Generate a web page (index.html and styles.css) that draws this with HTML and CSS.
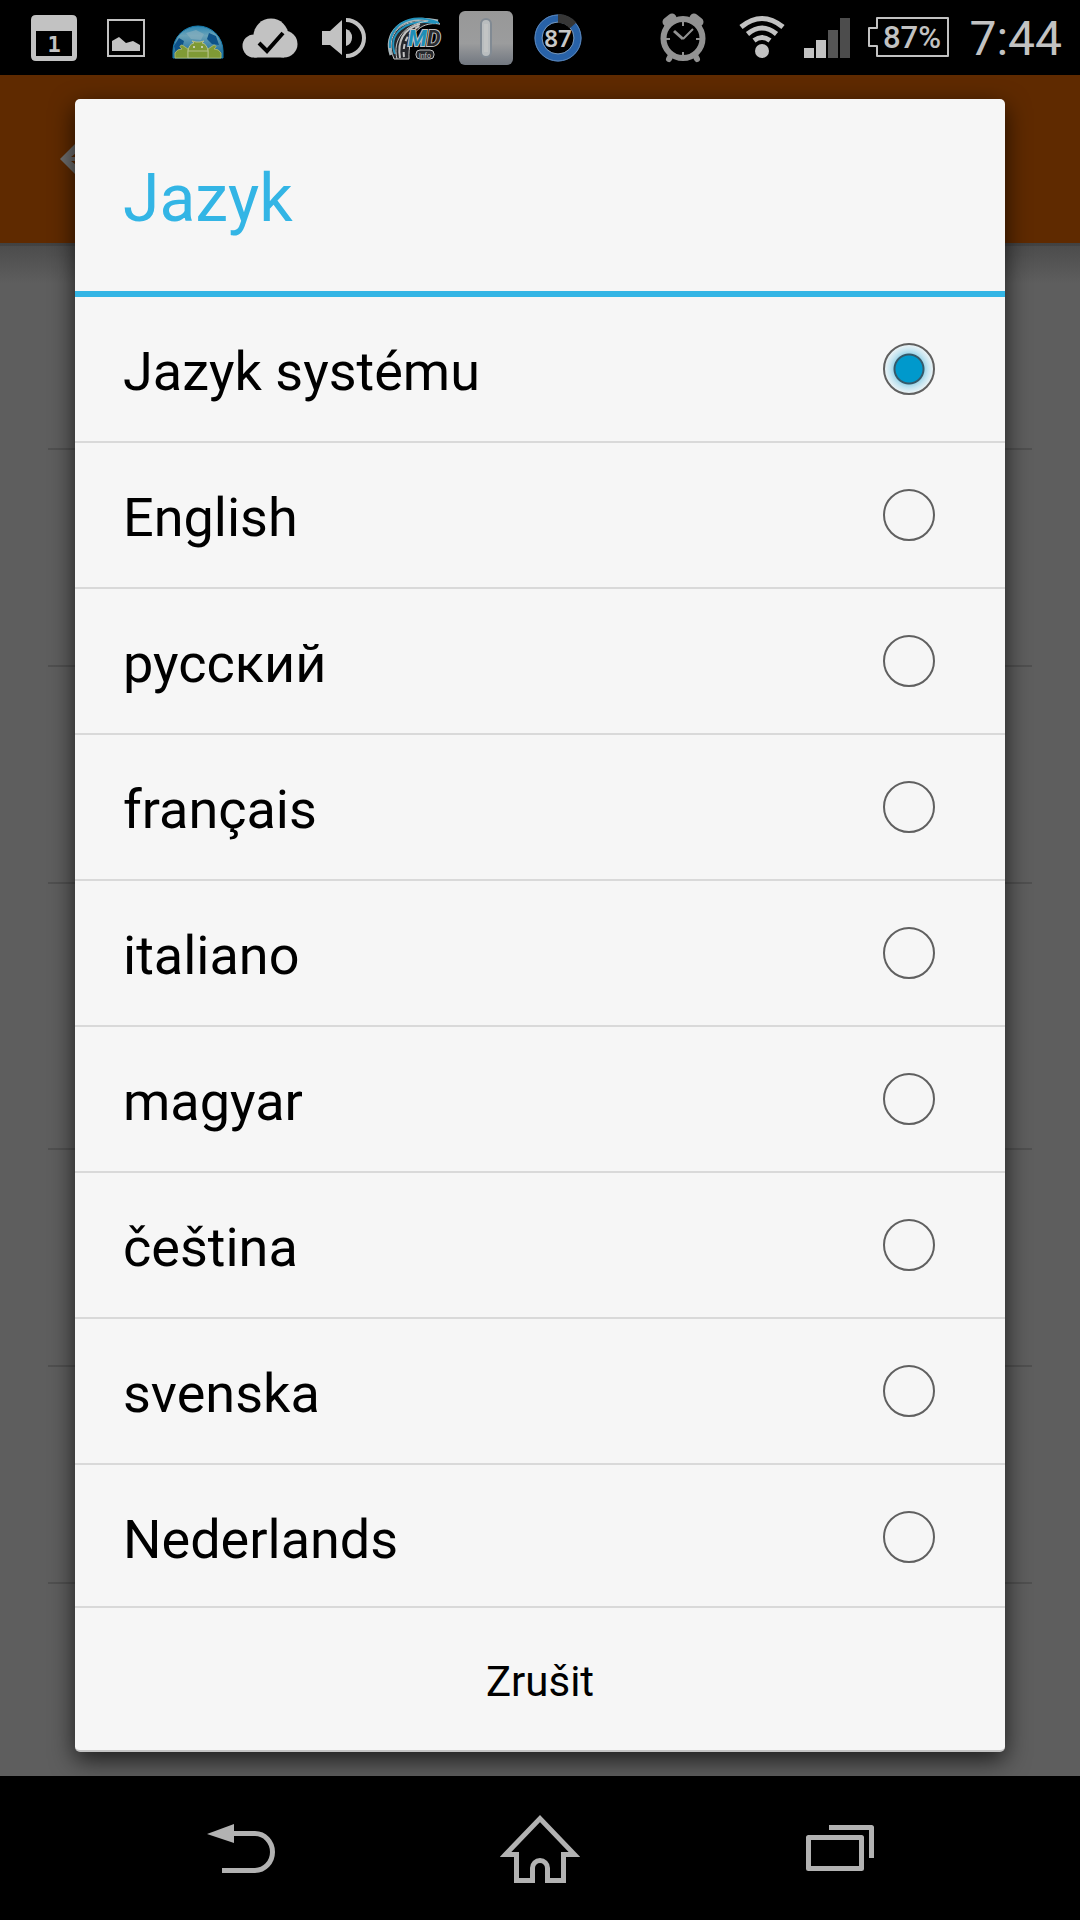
FILE: index.html
```html
<!DOCTYPE html>
<html lang="cs">
<head>
<meta charset="utf-8">
<meta name="viewport" content="width=device-width, initial-scale=1">
<title>Jazyk</title>
<link rel="stylesheet" href="styles.css">
</head>
<body>
<header class="status">
  <div class="notifications">
    <svg class="note" viewBox="0 0 72 75"><path fill="#c2c2c2" fill-rule="evenodd" d="M18 15h36q5 0 5 5v36q0 5-5 5H18q-5 0-5-5V20q0-5 5-5zM18 31v25h36V31z"/><text class="cal-day" x="36" y="52">1</text></svg>
    <svg class="note" viewBox="0 0 72 75"><rect x="18" y="20" width="36" height="36" fill="none" stroke="#c2c2c2" stroke-width="2"/><path fill="#c2c2c2" d="M22 41l7-4 7 6 7-2 7 4v6H22z"/></svg>
    <svg class="note" viewBox="0 0 72 75">
      <defs><linearGradient id="globe" x2="0" y2="1"><stop offset="0" stop-color="#2b86b4"/><stop offset=".3" stop-color="#6aa3b8"/><stop offset="1" stop-color="#0b5f97"/></linearGradient></defs>
      <path fill="url(#globe)" stroke="#167db0" stroke-width="1" d="M11 58V51a25 25 0 0 1 50 0v7z"/>
      <path fill="#0d5289" d="M12 46l5-8 5 3-2 7-6 5zM47 33l7 3 3 9-7-1-5-5z"/><path fill="#86aebe" d="M24 33l10-3 8 4-3 6-10-1z" opacity=".7"/>
      <path fill="#7f9a35" stroke="#a9b56e" d="M13 58v-5q2-4 7-4-4-3 0-4l6 4v9zM59 58v-5q-2-4-7-4 4-3 0-4l-6 4v9z"/>
      <path fill="#7f9a35" stroke="#b6c08b" d="M26 58v-7q1-7 6-8l-2-2 4 1h4l4-1-2 2q5 1 6 8v7zM26 51h20"/><circle cx="32" cy="47" r="1" fill="#ddd"/><circle cx="40" cy="47" r="1" fill="#ddd"/>
    </svg>
    <svg class="note" viewBox="0 0 72 75"><g fill="#c2c2c2"><circle cx="20" cy="46" r="11.500"/><circle cx="50" cy="44" r="13.500"/><circle cx="37" cy="36" r="17.500"/><path d="M20 40h30v17.500H20z"/></g><path d="M25 43l8 8 16-18" fill="none" stroke="#000" stroke-width="4"/></svg>
    <svg class="note" viewBox="0 0 72 75"><path fill="#c2c2c2" d="M16 31h8l12-11v35L24 45h-8z"/><path d="M40 29a9 9 0 0 1 0 17z" fill="#c2c2c2"/><path d="M40 20a18 18 0 0 1 0 36" fill="none" stroke="#c2c2c2" stroke-width="4"/></svg>
    <svg class="note" viewBox="0 0 72 75">
      <path fill="#25272b" stroke="#c2c2c2" stroke-width="1" d="M16 59C6 35 22 14 62 24 40 21 30 36 31 59z"/>
      <g fill="none"><path stroke="#a9b6ba" stroke-width="3" d="M13 55C6 35 20 13 60 21"/><path stroke="#2293bd" stroke-width="2" d="M12 48C10 28 29 10 61 23M17 54C10 35 25 18 58 23"/><path stroke="#c2c2c2" stroke-width="2" d="M22 58C19 40 26 29 42 24"/><path stroke="#c2c2c2" d="M19 59C14 39 27 24 50 21"/><path stroke="#c2c2c2" stroke-width="2" stroke-dasharray="5 3" d="M26 57C24 42 31 30 44 25"/></g>
      <text class="md" x="30" y="46"><tspan fill="#1d8eb7">M</tspan><tspan fill="#292b2e">D</tspan></text>
      <rect x="38" y="50" width="18" height="9" rx="4" fill="#25272b" stroke="#c2c2c2"/><text class="md-info" x="47" y="58">info</text>
    </svg>
    <svg class="note" viewBox="0 0 72 75"><defs><linearGradient id="plate" x2="0" y2="1"><stop offset="0" stop-color="#989898"/><stop offset=".6" stop-color="#9b9c9d"/><stop offset="1" stop-color="#717780"/></linearGradient></defs><rect x="9" y="11" width="54" height="54" rx="6" fill="url(#plate)"/><rect x="31" y="19" width="10" height="38" rx="5" fill="#b9bdbf" stroke="#818a93" stroke-width="2"/><path d="M36 24v28" stroke="#c2c4c4" stroke-width="4"/></svg>
    <svg class="note" viewBox="0 0 72 75"><circle cx="36" cy="38" r="19.500" fill="none" stroke="#2862a8" stroke-width="8"/><circle cx="36" cy="38" r="23" fill="none" stroke="#5c85b6" stroke-width="1"/><circle cx="36" cy="38" r="16" fill="none" stroke="#7795b5" stroke-width="1"/><path d="M36 18.500a19.500 19.500 0 0 1 15 7" fill="none" stroke="#363636" stroke-width="9"/><text class="ring-value" x="36" y="47">87</text></svg>
  </div>
  <div class="system">
    <svg class="alarm" viewBox="660 0 60 75"><g fill="none" stroke="#929292"><circle cx="683" cy="38.500" r="19.500" stroke-width="6"/><path stroke-width="9" stroke-linecap="round" d="M667 22l5-4M699 22l-5-4"/><path stroke-width="6" stroke-linecap="round" d="M670 57l-1 2M696 57l1 2"/><path stroke-width="2" d="M683 21v5M683 52v5M666 39h4M696 39h4M683 39l10-10"/><path stroke-width="3" d="M674 31l9 8"/></g></svg>
    <svg class="wifi" viewBox="738 0 48 75"><circle cx="762" cy="51" r="7" fill="#c2c2c2"/><g fill="none" stroke="#c2c2c2" stroke-width="5"><path d="M741 27q21-17 42 0M747.500 34q14.500-12 29 0M754 40.500q8-6 16 0"/></g></svg>
    <svg class="signal" viewBox="0 0 46 75"><path fill="#c2c2c2" d="M0 48h10v10H0zM12 40h10v18H12z"/><path fill="#555" d="M24 30h10v28H24z"/><path fill="#4c4c4c" d="M36 18h10v40H36z"/></svg>
    <svg class="battery" viewBox="868 0 81 75"><path d="M877 18h71v38h-71V46h-8V28h8z" fill="none" stroke="#c2c2c2" stroke-width="2" stroke-linejoin="round"/><text class="charge" x="912" y="48">87%</text></svg>
    <time class="clock">7:44</time>
  </div>
</header>

<main class="app">
  <div class="appbar"><svg class="up" viewBox="0 0 60 60"><path fill="#6e6e6e" fill-rule="evenodd" d="M0 30L30 0l30 30-30 30zM11 28h13V18zM11 32h13v10z"/></svg></div>
  <div class="settings">
    <div class="setting first"></div>
    <div class="setting second"></div>
    <div class="setting"></div>
    <div class="setting"></div>
    <div class="setting tall"></div>
    <div class="setting"></div>
    <div class="setting"></div>
  </div>
  <div class="overlay">
    <section class="dialog" role="dialog" aria-labelledby="dialog-title">
      <h1 class="title" id="dialog-title">Jazyk</h1>
      <div class="options">
        <label class="option"><span>Jazyk systému</span><input type="radio" name="lang" checked></label>
        <label class="option"><span>English</span><input type="radio" name="lang"></label>
        <label class="option"><span>русский</span><input type="radio" name="lang"></label>
        <label class="option"><span>français</span><input type="radio" name="lang"></label>
        <label class="option"><span>italiano</span><input type="radio" name="lang"></label>
        <label class="option"><span>magyar</span><input type="radio" name="lang"></label>
        <label class="option"><span>čeština</span><input type="radio" name="lang"></label>
        <label class="option"><span>svenska</span><input type="radio" name="lang"></label>
        <label class="option"><span>Nederlands</span><input type="radio" name="lang"></label>
      </div>
      <button class="cancel" type="button">Zrušit</button>
    </section>
  </div>
</main>

<nav class="navbar">
  <button class="key" type="button" aria-label="Zpět"><svg viewBox="200 1808 80 80"><path fill="#b2b2b2" d="M207 1834l27-10v19z"/><path fill="none" stroke="#b2b2b2" stroke-width="5" d="M232 1833.500h23a17.500 18.500 0 0 1 0 37h-33"/></svg></button>
  <button class="key" type="button" aria-label="Domů"><svg viewBox="500 1808 80 80"><path fill="none" stroke="#b2b2b2" stroke-width="5" d="M505.500 1854.500L540 1818.500l34.500 36h-11v26h-16V1868a7.500 7.500 0 0 0-15 0v12.500h-16v-26z"/></svg></button>
  <button class="key" type="button" aria-label="Poslední aplikace"><svg viewBox="800 1808 80 80"><g fill="none" stroke="#b2b2b2" stroke-width="5" stroke-linejoin="round"><path d="M808.500 1837.500h53v31h-53z"/><path d="M829 1827.500h42.500V1858"/></g></svg></button>
</nav>
</body>
</html>
```
FILE: styles.css
```css
* { box-sizing: border-box; }

body {
  margin: 0;
  height: 100vh;
  display: flex;
  flex-direction: column;
  background: #000;
  font-family: Roboto, "Noto Sans", sans-serif;
}

svg { display: block; }

.status {
  flex: none;
  height: 75px;
  display: flex;
  justify-content: space-between;
  padding: 0 18px;
  color: #c2c2c2;
}
.notifications { display: flex; }
.note { width: 72px; height: 75px; }
.system { display: flex; gap: 18px; }
.system svg { height: 75px; }
.alarm { width: 60px; }
.wifi { width: 48px; }
.signal { width: 46px; }
.battery { width: 81px; }
.clock { padding-left: 2px; font-size: 48px; line-height: 78px; }

.cal-day { font: bold 22px "DejaVu Sans Mono", monospace; fill: #c2c2c2; text-anchor: middle; }
.md { font: italic bold 22px Roboto, sans-serif; stroke: #c2c2c2; stroke-width: 2px; paint-order: stroke; }
.md-info { font: 7px Roboto, sans-serif; fill: #c2c2c2; text-anchor: middle; }
.ring-value { font: 600 24px "Noto Sans", sans-serif; fill: #c8c8c8; text-anchor: middle; }
.charge { font: 500 31px Roboto, sans-serif; fill: #c2c2c2; text-anchor: middle; }

.app {
  flex: 1;
  min-height: 0;
  position: relative;
  overflow: hidden;
  background: #5e5e5e;
}
.appbar {
  height: 168px;
  display: flex;
  align-items: center;
  padding: 0 60px;
  background: #5f2a00;
}
.up { width: 60px; height: 60px; }
.settings {
  padding: 0 48px;
  background: linear-gradient(#424242 0, #434343 3px, #4c4c4c 3px, #5e5e5e 40px);
}
.setting { height: 217px; border-bottom: 2px solid #505050; }
.first { height: 13px; }
.second { height: 194px; }
.tall { height: 266px; }

.overlay {
  position: absolute;
  inset: 0;
  padding: 24px 75px;
}
.dialog {
  height: 100%;
  display: flex;
  flex-direction: column;
  overflow: hidden;
  border-radius: 5px;
  border-bottom: 2px solid #c4c4c4;
  background: #f6f6f6;
  box-shadow: 0 8px 24px rgba(0, 0, 0, .7);
}
.title {
  flex: none;
  margin: 0;
  height: 198px;
  padding: 6px 48px 0;
  border-bottom: 6px solid #33b5e5;
  color: #33b5e5;
  font-size: 66px;
  font-weight: 400;
  line-height: 188px;
}
.options { flex: 1; min-height: 0; overflow: auto; scrollbar-width: none; }
.option {
  height: 146px;
  display: flex;
  align-items: center;
  justify-content: space-between;
  padding: 0 70px 0 48px;
  border-bottom: 2px solid #d9d9d9;
  color: #000;
  font-size: 54px;
}
.option span { padding-top: 4px; }
.option input {
  appearance: none;
  width: 52px;
  height: 52px;
  margin: 0;
  border: 2px solid #606060;
  border-radius: 50%;
}
.option input:checked {
  background: radial-gradient(circle, #0099cc 13px, #35596a 14px, #35596a 15px, #a5d8ea 16px, #c5e5f1 19px, #f1f5f6 25px);
}
.cancel {
  flex: none;
  height: 144px;
  padding: 5px 0 0;
  border: 0;
  border-top: 2px solid #d9d9d9;
  background: none;
  color: #000;
  font: 42px Roboto, sans-serif;
}

.navbar {
  flex: none;
  height: 144px;
  display: flex;
  padding: 0 90px;
}
.key {
  flex: 1;
  display: grid;
  place-items: center;
  padding: 0;
  border: 0;
  background: none;
}
.key svg { width: 80px; height: 80px; }
```
